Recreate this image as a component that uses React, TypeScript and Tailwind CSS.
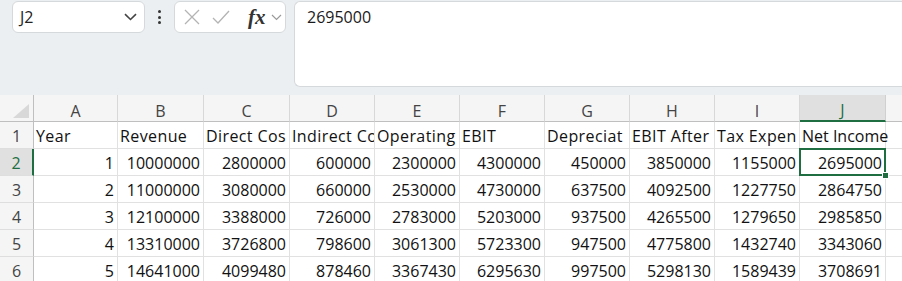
import React from 'react'

const COLS = ['A', 'B', 'C', 'D', 'E', 'F', 'G', 'H', 'I', 'J']

const HEAD = ['Year', 'Revenue', 'Direct Cos', 'Indirect Co', 'Operating', 'EBIT', 'Depreciat', 'EBIT After', 'Tax Expen', 'Net Income']

const ROWS: number[][] = [
  [1, 10000000, 2800000, 600000, 2300000, 4300000, 450000, 3850000, 1155000, 2695000],
  [2, 11000000, 3080000, 660000, 2530000, 4730000, 637500, 4092500, 1227750, 2864750],
  [3, 12100000, 3388000, 726000, 2783000, 5203000, 937500, 4265500, 1279650, 2985850],
  [4, 13310000, 3726800, 798600, 3061300, 5723300, 947500, 4775800, 1432740, 3343060],
  [5, 14641000, 4099480, 878460, 3367430, 6295630, 997500, 5298130, 1589439, 3708691],
]

const font = { fontFamily: '"Open Sans", "Liberation Sans", sans-serif' }

function Toolbar() {
  return (
    <div className="h-[95px] bg-[#eceff1] flex items-start pt-[1px] pl-[12px]">
      <div className="w-[133px] h-[32px] bg-white border border-[#d6d9db] rounded-[6px] flex items-center justify-between pl-[7px] pr-[7px]">
        <span className="text-[16px] text-[#222]">J2</span>
        <svg width="13" height="8" viewBox="0 0 13 8" fill="none" stroke="#444" strokeWidth="1.6">
          <path d="M1 1.2 L6.5 6.5 L12 1.2" />
        </svg>
      </div>
      <div className="w-[29px] h-[32px] flex flex-col items-center justify-center gap-[2.5px]">
        <span className="w-[3px] h-[3px] rounded-full bg-[#333]" />
        <span className="w-[3px] h-[3px] rounded-full bg-[#333]" />
        <span className="w-[3px] h-[3px] rounded-full bg-[#333]" />
      </div>
      <div className="w-[112px] h-[32px] bg-white border border-[#d6d9db] rounded-[6px] flex items-center pl-[9px]">
        <svg width="16" height="16" viewBox="0 0 16 16" fill="none" stroke="#b4b4b4" strokeWidth="1.3">
          <path d="M1 1 L15 15 M15 1 L1 15" />
        </svg>
        <svg className="ml-[12px]" width="18" height="14" viewBox="0 0 18 14" fill="none" stroke="#b4b4b4" strokeWidth="1.3">
          <path d="M1 8 L6 13 L17 1" />
        </svg>
        <span className="ml-[18px] text-[21px] leading-none italic font-bold text-[#333]" style={{ fontFamily: '"Liberation Serif", serif' }}>
          fx
        </span>
        <svg className="ml-[5px]" width="11" height="7" viewBox="0 0 11 7" fill="none" stroke="#9a9a9a" strokeWidth="1.2">
          <path d="M1 1 L5.5 5.5 L10 1" />
        </svg>
      </div>
      <div className="ml-[8px] flex-1 h-[86px] bg-white border border-r-0 border-[#d6d9db] rounded-l-[6px] pl-[12px] pt-[3px]">
        <span className="text-[16px] text-[#1a1a1a]">2695000</span>
      </div>
    </div>
  )
}

function Sheet() {
  const grid = 'grid grid-cols-[34px_84px_86px_86px_85px_85px_85px_85px_85px_85px_86px_1fr]'
  return (
    <div className={grid}>
      {/* header row */}
      <div className="h-[27px] bg-[#f5f5f5] border-r border-b border-[#bfbfbf] flex items-end justify-end pr-[4px] pb-[3px]">
        <svg width="16" height="14" viewBox="0 0 16 14">
          <path d="M16 0 L16 14 L0 14 Z" fill="#d8d8d8" />
        </svg>
      </div>
      {COLS.map((c) => {
        const active = c === 'J'
        return (
          <div
            key={c}
            className={
              active
                ? 'h-[27px] bg-[#e0e0e0] border-r border-[#d0d0d0] border-b-2 border-b-[#1e6e42] flex items-center justify-center pt-[5px] text-[16px] text-[#1e6e42]'
                : 'h-[27px] bg-[#f5f5f5] border-r border-[#d8d8d8] border-b border-b-[#bfbfbf] flex items-center justify-center pt-[6px] text-[16px] text-[#444]'
            }
          >
            {c}
          </div>
        )
      })}
      <div className="h-[27px] bg-[#f5f5f5] border-b border-[#bfbfbf]" />

      {/* row 1 labels */}
      <div className="h-[27px] bg-[#f5f5f5] border-r border-r-[#bfbfbf] border-b border-b-[#dedede] flex items-end justify-center text-[16px] text-[#444]">
        1
      </div>
      {HEAD.map((h, i) => (
        <div
          key={h}
          className={
            i === 9
              ? 'h-[27px] border-r border-b border-[#e1e1e1] flex items-end pl-[2px] whitespace-nowrap text-[16px] text-[#111]'
              : 'h-[27px] border-r border-b border-[#e1e1e1] flex items-end pl-[2px] overflow-hidden whitespace-nowrap text-[16px] text-[#111] tracking-[0.4px]'
          }
        >
          {h}
        </div>
      ))}
      <div className="h-[27px] border-b border-[#e1e1e1]" />

      {ROWS.map((r, ri) => {
        const rowNo = ri + 2
        const activeRow = rowNo === 2
        return (
          <React.Fragment key={rowNo}>
            <div
              className={
                activeRow
                  ? 'h-[27px] bg-[#e0e0e0] border-r-2 border-r-[#1e6e42] border-b border-b-[#dedede] flex items-end justify-center text-[16px] text-[#1e6e42]'
                  : 'h-[27px] bg-[#f5f5f5] border-r border-r-[#bfbfbf] border-b border-b-[#dedede] flex items-end justify-center text-[16px] text-[#444]'
              }
            >
              {rowNo}
            </div>
            {r.map((v, ci) => {
              const sel = activeRow && ci === 9
              return (
                <div
                  key={ci}
                  className={
                    sel
                      ? 'relative h-[27px] border-r border-b border-[#e1e1e1] flex items-end justify-end pr-[3px] text-[16px] text-[#111]'
                      : 'h-[27px] border-r border-b border-[#e1e1e1] flex items-end justify-end pr-[3px] text-[16px] text-[#111]'
                  }
                >
                  {v}
                  {sel && (
                    <>
                      <div className="absolute -left-[1px] -top-[1px] -right-[1px] -bottom-[1px] border-2 border-[#1e6e42]" />
                      <div className="absolute -right-[4px] -bottom-[4px] w-[7px] h-[7px] bg-[#1e6e42] border border-white" />
                    </>
                  )}
                </div>
              )
            })}
            <div className="h-[27px] border-b border-[#e1e1e1]" />
          </React.Fragment>
        )
      })}
    </div>
  )
}

export default function App() {
  return (
    <div className="w-[902px] h-[281px] overflow-hidden bg-white" style={font}>
      <Toolbar />
      <Sheet />
    </div>
  )
}
